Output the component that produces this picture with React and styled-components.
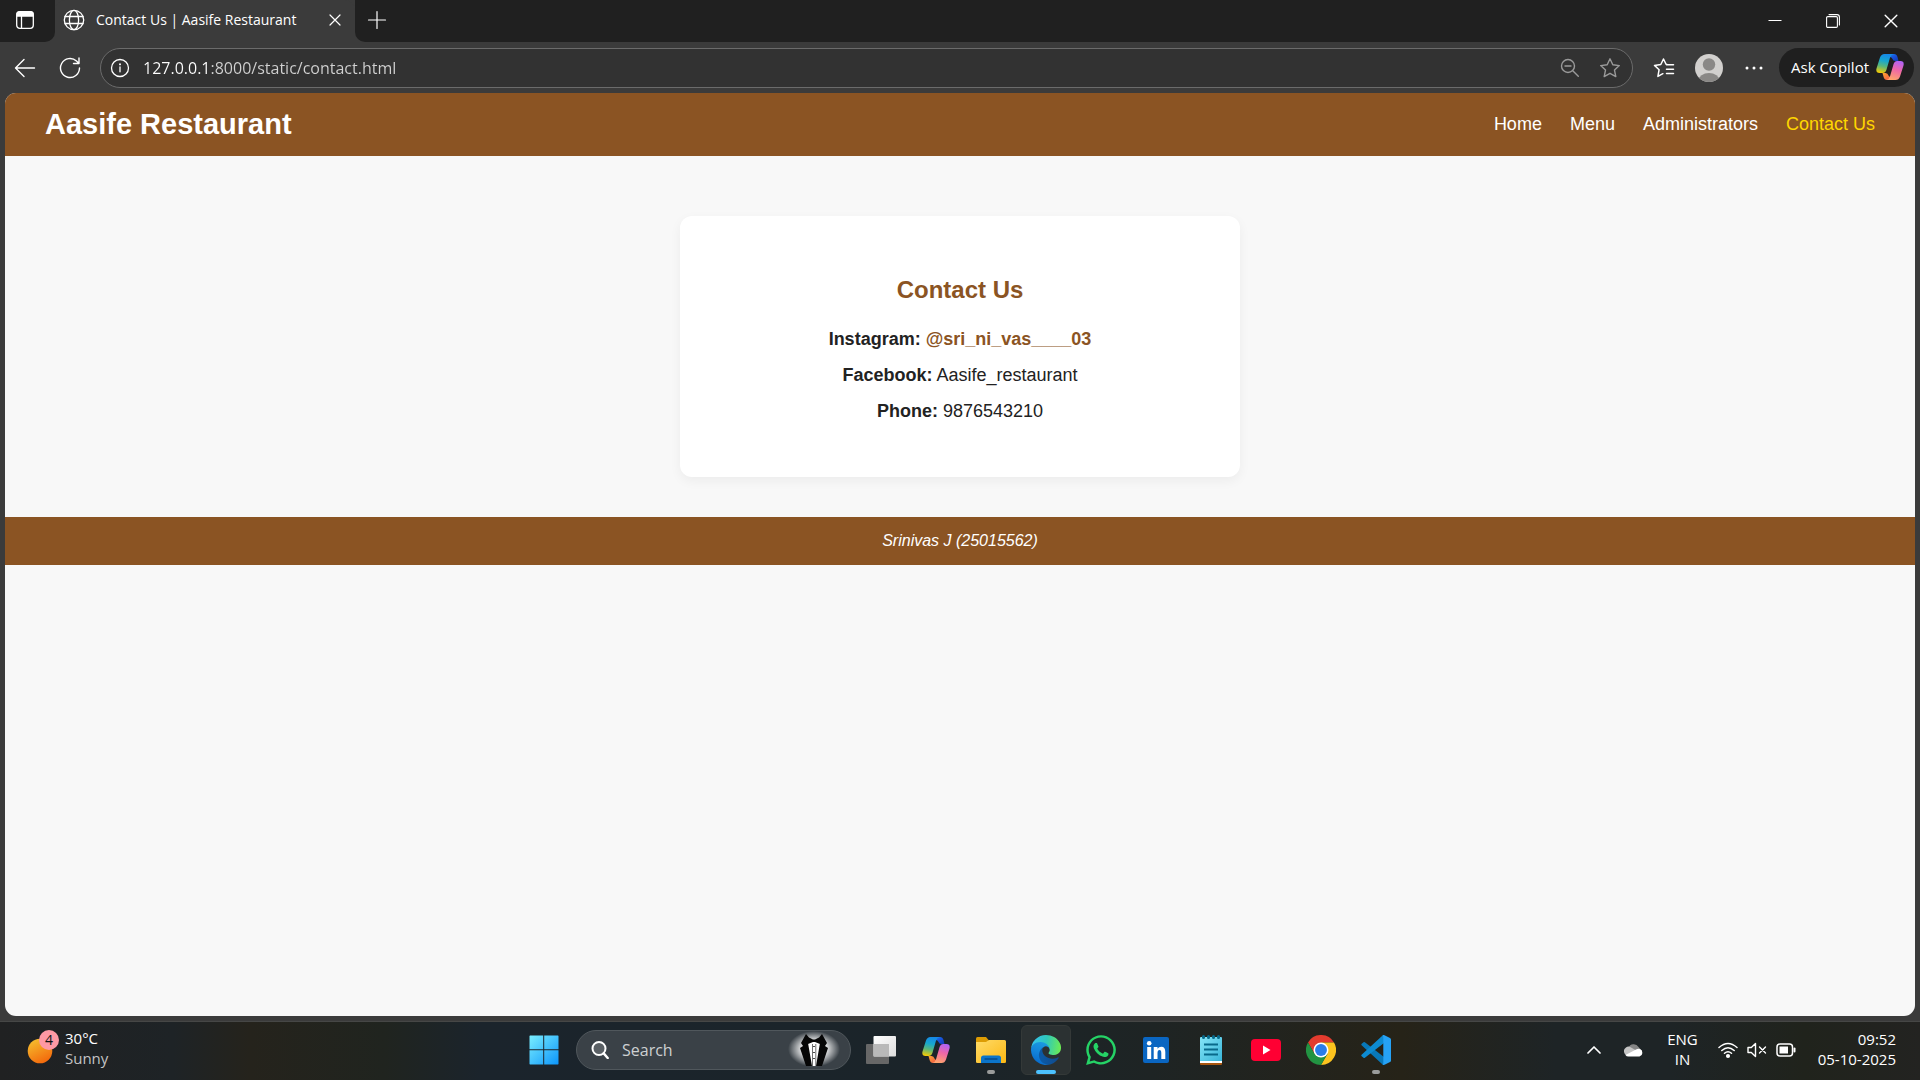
import React from "react";
import styled, { createGlobalStyle, css } from "styled-components";
import { FaWhatsapp } from "react-icons/fa";

const ui = `"Open Sans", "Noto Sans", sans-serif`;
const web = `"Liberation Sans", Arial, sans-serif`;

const Global = createGlobalStyle`
  *, *::before, *::after { box-sizing: border-box; }
  body { margin: 0; background: #3b3b3b; font-family: ${ui}; }
  button, input { font: inherit; color: inherit; }
  button { border: 0; padding: 0; background: none; cursor: pointer; }
  svg { display: block; flex: none; }
`;

const Desktop = styled.div`
  display: flex;
  flex-direction: column;
  height: 100vh;
  background: #3b3b3b;
  color: #fff;
`;

/* ---------- browser chrome ---------- */

const TabStrip = styled.header`
  display: flex;
  height: 42px;
  background: #202020;
`;

const IconButton = styled.button`
  display: flex;
  align-items: center;
  justify-content: center;
  width: ${(p) => p.$w || 44}px;
  height: ${(p) => p.$h || 40}px;
  color: ${(p) => p.$color || "#fff"};
`;

const TabActions = styled.div`
  width: 55px;
  padding-right: 5px;
  border-bottom-right-radius: 10px;
  background: #202020;
`;

const Tab = styled.div`
  display: flex;
  align-items: center;
  width: 300px;
  height: 42px;
  padding: 0 6px 2px 8px;
  border-radius: 10px 10px 0 0;
  background: #3b3b3b;
`;

const TabTitle = styled.span`
  flex: 1;
  padding-left: 11px;
  font-size: 14px;
  line-height: 20px;
  white-space: nowrap;
`;

const StripRest = styled.div`
  display: flex;
  flex: 1;
  justify-content: space-between;
  border-bottom-left-radius: 10px;
  background: #202020;
`;

const StripBase = styled.div`
  display: flex;
  flex: 1;
  background: #3b3b3b;
`;

const WindowButtons = styled.div`
  display: flex;
`;

const Toolbar = styled.div`
  display: flex;
  align-items: center;
  height: 51px;
  padding: 0 6px 0 2px;
`;

const AddressBar = styled.label`
  display: flex;
  flex: 1;
  align-items: center;
  height: 40px;
  margin: 0 6px 0 8px;
  padding-left: 9px;
  border: 1px solid #6b6b6b;
  border-radius: 20px;
  background: #323232;
`;

const AddressInput = styled.input`
  flex: 1;
  min-width: 0;
  padding: 0 0 0 13px;
  border: 0;
  outline: 0;
  background: linear-gradient(90deg, #fff 80px, #d2d2d2 80px);
  background-clip: text;
  color: transparent;
  caret-color: #fff;
  font-size: 16px;
  line-height: 24px;
`;

const CopilotButton = styled.button`
  display: flex;
  align-items: center;
  justify-content: space-between;
  width: 135px;
  height: 39px;
  padding: 0 10px 1px 12px;
  border-radius: 20px;
  background: #1f1f1f;
  font-size: 15px;
  white-space: nowrap;
`;

/* ---------- web page ---------- */

const Viewport = styled.div`
  flex: 1;
  min-height: 0;
  margin: 0 5px 5px;
  overflow: hidden;
  border-radius: 11px;
  background: #f8f8f8;
  color: #222;
  font-family: ${web};
`;

const SiteHeader = styled.div`
  display: flex;
  align-items: center;
  justify-content: space-between;
  height: 63px;
  padding: 0 40px 2px;
  background: #8b5423;
  color: #fff;
`;

const SiteName = styled.h1`
  margin: 0;
  font-size: 29px;
  line-height: 32px;
`;

const SiteNav = styled.nav`
  display: flex;
  gap: 28px;
`;

const NavLink = styled.a`
  color: ${(p) => (p.$active ? "#ffd700" : "#fff")};
  font-size: 18px;
  line-height: 20px;
  text-decoration: none;
`;

const Card = styled.main`
  width: 560px;
  max-width: 100%;
  margin: 60px auto 40px;
  padding: 60px 40px 47px;
  border-radius: 12px;
  background: #fff;
  box-shadow: 0 4px 12px rgba(0, 0, 0, 0.05);
  text-align: center;
`;

const CardTitle = styled.h2`
  margin: 0 0 18px;
  color: #8b5423;
  font-size: 24px;
  line-height: 28px;
`;

const ContactLine = styled.p`
  margin: 0 0 2px;
  font-size: 18px;
  line-height: 34px;
`;

const ContactLink = styled.a`
  color: #8b5423;
  font-weight: bold;
  text-decoration: none;
`;

const SiteFooter = styled.footer`
  height: 48px;
  background: #8b5423;
  color: #fff;
  font-size: 16px;
  font-style: italic;
  line-height: 48px;
  text-align: center;
`;

/* ---------- taskbar ---------- */

const Taskbar = styled.footer`
  display: grid;
  grid-template-columns: 1fr auto 1fr;
  align-items: center;
  height: 59px;
  padding-bottom: 2px;
  border-top: 1px solid #464746;
  background: linear-gradient(90deg, #202122 0%, #1e2326 9%, #25231c 13%, #20241f 20%, #1b242c 25%, #1b2429 50%, #1e2424 60%, #262318 73%, #1e2426 81%, #1e2426 87%, #20231c 94%, #232321 100%);
`;

const Weather = styled.button`
  display: flex;
  align-items: center;
  gap: 6px;
  justify-self: start;
  padding: 0 0 4px 27px;
  text-align: left;
`;

const Stack = styled.span`
  display: flex;
  flex-direction: column;
  padding-bottom: ${(p) => p.$pb || 0}px;
  font-size: 15px;
  line-height: 20px;
  text-align: ${(p) => p.$align || "left"};
`;

const Muted = styled.span`
  color: #c4c4c4;
`;

const Apps = styled.div`
  display: flex;
  align-items: center;
  gap: 5px;
`;

const AppButton = styled.button`
  position: relative;
  display: flex;
  align-items: center;
  justify-content: center;
  width: 50px;
  height: 50px;
  border: 1px solid transparent;
  border-radius: 6px;
  ${(p) => p.$active && css`
    border-color: #343938;
    background: #2b3132;
  `}
`;

const RunMark = styled.span`
  position: absolute;
  bottom: 0;
  left: 50%;
  width: ${(p) => (p.$active ? 20 : 8)}px;
  height: 4px;
  border-radius: 2px;
  background: ${(p) => (p.$active ? "#4cc2ff" : "#9a9c9b")};
  transform: translateX(-50%);
`;

const SearchBox = styled.label`
  display: flex;
  align-items: center;
  width: 275px;
  height: 40px;
  margin-left: 2px;
  padding: 0 8px 0 14px;
  border: 1px solid #50575c;
  border-radius: 20px;
  background: #3a4147;
`;

const SearchInput = styled.input`
  flex: 1;
  min-width: 0;
  padding: 0 0 0 13px;
  border: 0;
  outline: 0;
  background: none;
  font-size: 16px;
  line-height: 24px;
  &::placeholder { color: #cdd0d2; opacity: 1; }
`;

const Tray = styled.div`
  display: flex;
  align-items: center;
  justify-self: end;
  padding-right: 12px;
`;

const TrayButton = styled.button`
  display: flex;
  align-items: center;
  justify-content: center;
  gap: 9px;
  height: 48px;
  padding: 0 ${(p) => p.$px || 10}px;
`;

/* ---------- icons ---------- */

const Line = ({ w = 20, box = 20, sw = 1.3, children }) => (
  <svg width={w} height={w} viewBox={`0 0 ${box} ${box}`} fill="none" stroke="currentColor" strokeWidth={sw} strokeLinecap="round" strokeLinejoin="round" aria-hidden="true">{children}</svg>
);

const TabsIcon = () => (
  <Line w={20} sw={1.3}><rect x="1.7" y="1.7" width="16.6" height="16.6" rx="3" /><path d="M2 4q0-2 2-2h12q2 0 2 2v2H2z" fill="currentColor" /><path d="M6.500 6v12" /></Line>
);
const GlobeIcon = () => (
  <Line w={22} box={22} sw={1.3}><circle cx="11" cy="11" r="9.700" /><ellipse cx="11" cy="11" rx="4.600" ry="9.700" /><path d="M2 7.500h18M2 14.500h18" /></Line>
);
const CloseIcon = ({ w = 12 }) => <Line w={w} box={12} sw={1.2}><path d="M1 1l10 10M11 1L1 11" /></Line>;
const PlusIcon = () => <Line w={20} sw={1.2}><path d="M10 1.500v17M1.500 10h17" /></Line>;
const MinimizeIcon = () => <Line w={14} box={14} sw={1}><path d="M.5 6.500h13" strokeLinecap="butt" /></Line>;
const RestoreIcon = () => <Line w={14} box={14} sw={1.1}><rect x=".6" y="2.600" width="10.800" height="10.800" rx="1.200" /><path d="M3 .6h8q2.400 0 2.400 2.400v8" /></Line>;
const BackIcon = () => <Line w={22} box={22} sw={1.4}><path d="M20.500 11H1.800M10 2.500L1.500 11l8.500 8.500" /></Line>;
const ReloadIcon = () => <Line w={22} box={22} sw={1.4}><path d="M20.500 11A9.500 9.500 0 1 1 17.500 4.100L19.500 6M20 1v5.500h-5.500" /></Line>;
const InfoIcon = () => <Line w={20} sw={1.3}><circle cx="10" cy="10" r="8.500" /><path d="M10 9v4.800" /><path d="M10 6.300v.1" strokeWidth="1.900" /></Line>;
const ZoomOutIcon = () => <Line w={20} sw={1.4}><circle cx="8" cy="8" r="6.500" /><path d="M5 8h6M13 13l5.300 5.300" /></Line>;
const StarIcon = () => <Line w={22} box={22} sw={1.4}><path d="M11 1.800l2.800 6 6.500.8-4.800 4.500 1.300 6.500-5.800-3.300-5.800 3.300 1.300-6.500-4.800-4.500 6.500-.8z" /></Line>;
const FavoritesIcon = () => <Line w={22} box={22} sw={1.5}><path d="M14 7.600l-.8-.1L10.500 2 7.800 7.500l-6.300.9 4.600 4.300-1.200 6.700 5-2.700M13.500 7.800H20.500M13.500 12.200h7M13.500 16.600h7" /></Line>;
const AvatarIcon = () => (
  <svg width="28" height="28" viewBox="0 0 28 28" aria-hidden="true">
    <clipPath id="avatar"><circle cx="14" cy="14" r="14" /></clipPath>
    <g clipPath="url(#avatar)"><path fill="#d2d0ce" d="M0 0h28v28H0z" /><circle cx="14" cy="10.500" r="6.200" fill="#8a8886" /><ellipse cx="14" cy="26.500" rx="10.500" ry="7.500" fill="#8a8886" /></g>
  </svg>
);
const DotsIcon = () => <svg width="18" height="4" viewBox="0 0 18 4" fill="currentColor" aria-hidden="true"><circle cx="2" cy="2" r="1.500" /><circle cx="9" cy="2" r="1.500" /><circle cx="16" cy="2" r="1.500" /></svg>;

const CopilotIcon = ({ id }) => (
  <svg width="28" height="28" viewBox="0 0 28 28" aria-hidden="true">
    <defs>
      <linearGradient id={`${id}a`} x1=".5" y1="0" x2=".3" y2="1"><stop offset="0" stopColor="#1689e8" /><stop offset=".35" stopColor="#17a7ce" /><stop offset=".65" stopColor="#5bb77a" /><stop offset="1" stopColor="#f4cb05" /></linearGradient>
      <linearGradient id={`${id}b`} x1=".7" y1="0" x2=".4" y2="1"><stop offset="0" stopColor="#b062f6" /><stop offset=".45" stopColor="#ee66a8" /><stop offset="1" stopColor="#ffa46c" /></linearGradient>
      <linearGradient id={`${id}c`} x1="0" y1="0" x2="1" y2="1"><stop offset="0" stopColor="#178be8" /><stop offset=".5" stopColor="#1850dc" /><stop offset="1" stopColor="#123bb0" /></linearGradient>
      <linearGradient id={`${id}d`} x1="0" y1="0" x2="1" y2="1"><stop offset="0" stopColor="#ffa52e" /><stop offset="1" stopColor="#ee4e4c" /></linearGradient>
    </defs>
    <path d="M12 1h6q2.700 0 3.500 3l1 4h-3q-2.500 0-3.300-2.500-.8-2-2.700-1.500z" fill={`url(#${id}c)`} />
    <path d="M16 27h-5q-2.600 0-3.400-3l-1.100-4h3q2.300 0 3 2.500.8 2 2.700 1.500z" fill={`url(#${id}d)`} />
    <path d="M8.500 1h9q-2.500.5-3.600 4L10.400 17q-1 3-3.600 3H3.500Q-.5 20 .5 15.500L4 4.500Q5.200 1 8.500 1z" fill={`url(#${id}a)`} />
    <path d="M19.500 27h-9q2.500-.5 3.600-4L17.600 11q1-3 3.600-3h3.300q4 0 3 4.500l-3.500 11Q22.800 27 19.500 27z" fill={`url(#${id}b)`} />
  </svg>
);

const SunIcon = () => (
  <svg width="32" height="36" viewBox="0 0 32 36" aria-hidden="true">
    <defs><linearGradient id="sun" x1=".2" y1="0" x2=".7" y2="1"><stop offset="0" stopColor="#f5bf2e" /><stop offset="1" stopColor="#f3660b" /></linearGradient></defs>
    <circle cx="13" cy="21" r="12.300" fill="url(#sun)" /><circle cx="22" cy="10" r="10" fill="#ff99a4" />
    <text x="22" y="15" textAnchor="middle" fontSize="14" fill="#111">4</text>
  </svg>
);
const WindowsIcon = () => (
  <svg width="30" height="30" viewBox="0 0 30 30" aria-hidden="true">
    <defs><linearGradient id="win" gradientUnits="userSpaceOnUse" x1="0" y1="0" x2="30" y2="30"><stop offset="0" stopColor="#7cf0ff" /><stop offset="1" stopColor="#0a93fa" /></linearGradient></defs>
    <path fill="url(#win)" d="M1 .5h13.200v13.700H.5V1zM15.200.5H29l.5.5v13.200H15.200zM.5 15.200h13.700v14.300H1L.5 29zM15.200 15.200h14.300V29l-.5.500H15.200z" />
  </svg>
);
const SearchIcon = () => <Line w={18} box={18} sw={2}><circle cx="8" cy="7.500" r="6.500" fill="#5a6065" /><path d="M12.700 12.400l4 4.600" strokeWidth="2.400" /></Line>;
const TuxedoIcon = () => (
  <svg width="56" height="38" viewBox="0 0 56 38" aria-hidden="true">
    <defs><radialGradient id="glow"><stop offset=".45" stopColor="#fff" stopOpacity=".9" /><stop offset="1" stopColor="#fff" stopOpacity="0" /></radialGradient></defs>
    <ellipse cx="28" cy="18" rx="26" ry="18" fill="url(#glow)" />
    <g transform="translate(14 3)">
      <path d="M7 8h14l-4 24h-6z" fill="#fff" />
      <path d="M6 0l2.500 3-.5 6 4 23H6L0 14l3-2-2-3zM22 0l-2.500 3 .5 6-4 23h6l6-18-3-2 2-3z" fill="#060606" />
      <path d="M8 3l5 2.500h2L20 3v7l-5-2h-2l-5 2z" fill="#060606" />
      <path d="M12.500 10v22M15.800 10v22" stroke="#333" strokeWidth=".7" /><path d="M14 12v1M14 18v1M14 24v1" stroke="#111" strokeWidth="1.500" />
    </g>
  </svg>
);
const TaskViewIcon = () => (
  <svg width="30" height="28" viewBox="0 0 30 28" aria-hidden="true">
    <defs><linearGradient id="tv" x1="0" y1="0" x2="1" y2="1"><stop offset="0" stopColor="#fff" /><stop offset="1" stopColor="#dcdcdc" /></linearGradient></defs>
    <rect y="8" width="23" height="20" rx="1" fill="#676767" /><rect x="7.500" width="22.500" height="20.500" rx="1" fill="url(#tv)" /><path d="M7.500 8H23v12.500H7.500z" fill="#b9b9b9" />
  </svg>
);
const FolderIcon = () => (
  <svg width="30" height="28" viewBox="0 0 30 28" aria-hidden="true">
    <defs><linearGradient id="fold" x1="0" y1="0" x2="1" y2="1"><stop offset="0" stopColor="#ffdb68" /><stop offset="1" stopColor="#fcb813" /></linearGradient></defs>
    <path d="M0 2.500Q0 1 1.500 1H10l3 3.500V8H0z" fill="#dd9c04" /><path d="M0 6h10l3-2h15.500Q30 4 30 5.500V26q0 1-1.500 1h-27Q0 27 0 26z" fill="url(#fold)" />
    <path d="M5 27v-5q0-2.500 2.500-2.500h15Q25 19.500 25 22v5z" fill="#0b74c9" /><path d="M9 23h12" stroke="#064a8b" strokeWidth="1.400" strokeLinecap="round" />
  </svg>
);
const EdgeIcon = () => (
  <svg width="30" height="30" viewBox="0 0 256 256" aria-hidden="true">
    <defs>
      <linearGradient id="edgeA" x1=".2" y1=".5" x2="1" y2=".5"><stop offset="0" stopColor="#0c59a4" /><stop offset="1" stopColor="#114a8b" /></linearGradient>
      <linearGradient id="edgeB" x1=".6" y1="0" x2=".3" y2="1"><stop offset="0" stopColor="#1b9de2" /><stop offset=".5" stopColor="#1383d9" /><stop offset="1" stopColor="#0667c8" /></linearGradient>
      <linearGradient id="edgeC" x1="0" y1=".4" x2="1" y2=".5"><stop offset="0" stopColor="#35c1f1" /><stop offset=".5" stopColor="#2fc8bb" /><stop offset="1" stopColor="#6beb55" /></linearGradient>
    </defs>
    <path fill="url(#edgeA)" d="M231 190.500a93.700 93.700 0 0 1-10.500 4.700 101.900 101.900 0 0 1-35.900 6.500c-47.300 0-88.500-32.500-88.500-74.300a31.500 31.500 0 0 1 16.400-27.300c-42.800 1.800-53.800 46.400-53.800 72.500 0 73.900 68.100 81.400 82.800 81.400 7.900 0 19.800-2.300 27-4.600l1.300-.4a128.300 128.300 0 0 0 66.600-52.800 4 4 0 0 0-5.400-5.700z" />
    <path fill="url(#edgeB)" d="M105.700 241.400a79.200 79.200 0 0 1-22.700-21.300 80.700 80.700 0 0 1 29.500-120c3.200-1.500 8.500-4.200 15.600-4.100a32.400 32.400 0 0 1 25.700 13 31.900 31.900 0 0 1 6.300 18.700c0-.2 24.500-79.600-80-79.600C36.200 48.100 0 89.800 0 126.300a130.200 130.200 0 0 0 12.100 56 128 128 0 0 0 156.400 67.100 75.600 75.600 0 0 1-62.800-8z" />
    <path fill="url(#edgeC)" d="M152.300 148.900c-.8 1-3.300 2.500-3.300 5.700 0 2.600 1.700 5.200 4.800 7.300 14.400 10.100 41.700 8.700 41.700 8.700a59.600 59.600 0 0 0 30.300-8.300 61.400 61.400 0 0 0 30.400-52.900c.3-22.400-8-37.300-11.300-43.900C223.500 23.900 177.700 0 128 0A128 128 0 0 0 0 126.200c.5-36.500 36.800-66 80-66 3.500 0 23.500.3 42 10.100 16.300 8.600 24.900 18.900 30.900 29.200 6.200 10.700 7.300 24.100 7.300 29.500s-2.700 13.300-7.900 19.900z" />
  </svg>
);
const LinkedInIcon = () => (
  <svg width="26" height="26" viewBox="0 0 26 26" aria-hidden="true"><rect width="26" height="26" rx="2" fill="#0a66c2" /><g fill="#fff"><circle cx="6.200" cy="6.200" r="2.300" /><path d="M4.200 10h4v12h-4zM10.700 10h3.800v1.700q1.200-2 3.800-2 4 0 4 5.300v7h-4v-6q0-2.900-1.800-2.900-2 0-2 2.900v6h-3.800z" /></g></svg>
);
const NotepadIcon = () => (
  <svg width="22" height="30" viewBox="0 0 22 30" aria-hidden="true">
    <defs><linearGradient id="note" x1="0" y1="0" x2="1" y2="1"><stop offset="0" stopColor="#86e5f7" /><stop offset="1" stopColor="#38b5d9" /></linearGradient></defs>
    <path d="M0 25h22v4q0 1-1 1H1q-1 0-1-1z" fill="#a9560f" /><path d="M0 24h22v4H0z" fill="#fff" /><path d="M0 3q0-1 1-1h20q1 0 1 1v23H0z" fill="url(#note)" />
    <path d="M4 9.500h14M4 14.500h14M4 19.500h14" stroke="#08698a" strokeWidth="1.800" /><path d="M3.500 1.500v1M8.500 1.500v1M13.500 1.500v1M18.500 1.500v1" stroke="#08698a" strokeWidth="3" strokeLinecap="round" />
  </svg>
);
const YouTubeIcon = () => <svg width="30" height="22" viewBox="0 0 30 22" aria-hidden="true"><rect width="30" height="22" rx="4" fill="#ff0033" /><path d="M12 6.500l7.500 4.500-7.500 4.500z" fill="#fff" /></svg>;
const ChromeIcon = () => (
  <svg width="30" height="30" viewBox="0 0 48 48" aria-hidden="true">
    <path d="M24 12h20.800A24 24 0 0 0 3.200 12l10.400 18z" fill="#e33b2e" /><path d="M34.400 30L24 48a24 24 0 0 0 20.800-36H24z" fill="#fcc31e" /><path d="M13.600 30L3.200 12A24 24 0 0 0 24 48l10.400-18z" fill="#229342" />
    <circle cx="24" cy="24" r="12" fill="#fff" /><circle cx="24" cy="24" r="9.500" fill="#2b7de9" />
  </svg>
);
const CodeIcon = () => (
  <svg width="30" height="30" viewBox="0 0 30 30" aria-hidden="true">
    <path d="M1 8.500l1.500-1.200q.7-.4 1.400 0L23 22v8q-1-.1-1.700-.7L.6 10.300q-.8-.9.400-1.800z" fill="#0878b9" /><path d="M1 21.500l1.500 1.200q.7.400 1.400 0L23 8V0q-1 .1-1.700.7L.6 19.700q-.8.900.4 1.800z" fill="#0d8bd2" />
    <path d="M21.300 29.300q1.200 1 2.700.3l5-2.500q1-.6 1-1.700V4.600q0-1.100-1-1.700L24 .4q-1.500-.7-2.700.3.900-.3 1 1v26.600q-.1 1.300-1 1z" fill="#26a2f5" />
  </svg>
);
const ChevronIcon = () => <Line w={14} box={14} sw={1.7}><path d="M1 10l6-6 6 6" /></Line>;
const CloudIcon = () => (
  <svg width="20" height="14" viewBox="0 0 20 14" aria-hidden="true"><path d="M4.500 5A5.500 5.500 0 0 1 14.500 4L18 8 9 9z" fill="#858585" /><path d="M0 9a4.500 4.500 0 0 1 7-4.500L15 9l-10 4Q1 13 0 9z" fill="#c4c4c4" /><path d="M1.500 12L12 6.500q2-1 4-.5a4 4 0 0 1-.500 7.500H4.500Q2.500 13.500 1.500 12z" fill="#fff" /></svg>
);
const WifiIcon = () => <Line w={20} sw={1.5}><path d="M1 7.500q9-8 18 0M3.800 10.500q6.200-5.500 12.400 0M6.500 13.300q3.500-3 7 0" /><circle cx="10" cy="16" r="1.300" fill="currentColor" /></Line>;
const MuteIcon = () => <Line w={20} sw={1.4}><path d="M1 7.500h3.300L8.500 3.500v13l-4.200-4H1zM12.500 7l6 6M18.500 7l-6 6" /></Line>;
const BatteryIcon = () => <Line w={20} sw={1.5}><rect x="1" y="4" width="15.500" height="12" rx="3" /><path d="M3.500 6.500H12v7H3.500z" fill="currentColor" stroke="none" /><path d="M18.500 8.500v3" strokeWidth="2" /></Line>;

const pinned = [
  { name: "Task view", icon: <TaskViewIcon /> },
  { name: "Copilot", icon: <CopilotIcon id="task" /> },
  { name: "File Explorer", icon: <FolderIcon />, running: true },
  { name: "Microsoft Edge", icon: <EdgeIcon />, running: true, active: true },
  { name: "WhatsApp", icon: <FaWhatsapp size={34} color="#25d366" /> },
  { name: "LinkedIn", icon: <LinkedInIcon /> },
  { name: "Notepad", icon: <NotepadIcon /> },
  { name: "YouTube", icon: <YouTubeIcon /> },
  { name: "Chrome", icon: <ChromeIcon /> },
  { name: "Visual Studio Code", icon: <CodeIcon />, running: true },
];

const links = ["Home", "Menu", "Administrators", "Contact Us"];

export default function App() {
  return (
    <Desktop>
      <Global />
      <TabStrip>
        <StripBase>
          <TabActions><IconButton $w={50} aria-label="Tab actions"><TabsIcon /></IconButton></TabActions>
          <Tab>
            <GlobeIcon />
            <TabTitle>Contact Us | Aasife Restaurant</TabTitle>
            <IconButton $w={28} $h={28} aria-label="Close tab"><CloseIcon /></IconButton>
          </Tab>
          <StripRest>
            <IconButton aria-label="New tab"><PlusIcon /></IconButton>
            <WindowButtons>
              <IconButton $w={58} $h={42} aria-label="Minimize"><MinimizeIcon /></IconButton>
              <IconButton $w={58} $h={42} aria-label="Restore"><RestoreIcon /></IconButton>
              <IconButton $w={58} $h={42} aria-label="Close"><CloseIcon w={14} /></IconButton>
            </WindowButtons>
          </StripRest>
        </StripBase>
      </TabStrip>
      <Toolbar>
        <IconButton $w={46} aria-label="Back"><BackIcon /></IconButton>
        <IconButton $w={44} aria-label="Reload"><ReloadIcon /></IconButton>
        <AddressBar>
          <InfoIcon />
          <AddressInput aria-label="Address" defaultValue="127.0.0.1:8000/static/contact.html" />
          <IconButton $w={36} $h={38} $color="#9a9a9a" aria-label="Zoom out"><ZoomOutIcon /></IconButton>
          <IconButton $w={44} $h={38} $color="#9a9a9a" aria-label="Add to favorites"><StarIcon /></IconButton>
        </AddressBar>
        <IconButton $w={50} aria-label="Favorites"><FavoritesIcon /></IconButton>
        <IconButton $w={40} aria-label="Profile"><AvatarIcon /></IconButton>
        <IconButton $w={50} aria-label="More"><DotsIcon /></IconButton>
        <CopilotButton>Ask Copilot <CopilotIcon id="bar" /></CopilotButton>
      </Toolbar>

      <Viewport>
        <SiteHeader>
          <SiteName>Aasife Restaurant</SiteName>
          <SiteNav>
            {links.map((l) => <NavLink key={l} href="#" $active={l === "Contact Us"}>{l}</NavLink>)}
          </SiteNav>
        </SiteHeader>
        <Card>
          <CardTitle>Contact Us</CardTitle>
          <ContactLine><b>Instagram:</b> <ContactLink href="#">@sri_ni_vas____03</ContactLink></ContactLine>
          <ContactLine><b>Facebook:</b> Aasife_restaurant</ContactLine>
          <ContactLine><b>Phone:</b> 9876543210</ContactLine>
        </Card>
        <SiteFooter>Srinivas J (25015562)</SiteFooter>
      </Viewport>

      <Taskbar>
        <Weather>
          <SunIcon />
          <Stack><span>30°C</span><Muted>Sunny</Muted></Stack>
        </Weather>
        <Apps>
          <AppButton aria-label="Start"><WindowsIcon /></AppButton>
          <SearchBox>
            <SearchIcon />
            <SearchInput placeholder="Search" aria-label="Search" />
            <TuxedoIcon />
          </SearchBox>
          {pinned.map((a) => (
            <AppButton key={a.name} $active={a.active} aria-label={a.name}>
              {a.icon}
              {a.running && <RunMark $active={a.active} />}
            </AppButton>
          ))}
        </Apps>
        <Tray>
          <TrayButton aria-label="Hidden icons"><ChevronIcon /></TrayButton>
          <TrayButton $px={13} aria-label="OneDrive"><CloudIcon /></TrayButton>
          <TrayButton><Stack $align="center" $pb={2}><span>ENG</span><span>IN</span></Stack></TrayButton>
          <TrayButton aria-label="Network, sound and battery"><WifiIcon /><MuteIcon /><BatteryIcon /></TrayButton>
          <TrayButton $px={12}><Stack $align="right" $pb={2}><span>09:52</span><span>05-10-2025</span></Stack></TrayButton>
        </Tray>
      </Taskbar>
    </Desktop>
  );
}
